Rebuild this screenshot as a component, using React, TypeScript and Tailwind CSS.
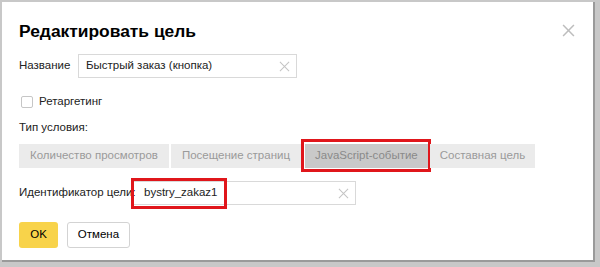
import React from 'react';

const font = { fontFamily: '"Liberation Sans", Arial, sans-serif' };

function Cross({ size, color, stroke }: { size: number; color: string; stroke: number }) {
  return (
    <svg width={size} height={size} viewBox="0 0 12 12" fill="none">
      <path d="M1 1L11 11M11 1L1 11" stroke={color} strokeWidth={stroke} />
    </svg>
  );
}

const types = ['Количество просмотров', 'Посещение страниц', 'JavaScript-событие', 'Составная цель'];

export default function App() {
  return (
    <div className="h-[267px] w-[600px] overflow-hidden bg-[#c8c8c8] pl-[2px] pt-[2px]" style={font}>
      <div className="h-[260px] w-[593px] whitespace-nowrap border-r-[2px] border-b-[2px] border-[#9a9a9a] bg-white pl-[17px] pt-[18px] text-[11.5px] text-[#222]">
        <div className="flex items-start justify-between pr-[18px]">
          <h1 className="text-[17.4px] font-bold leading-[23px] text-black">Редактировать цель</h1>
          <div className="mt-[4px]">
            <Cross size={13} color="#bdbdbd" stroke={1.4} />
          </div>
        </div>

        <div className="mt-[11px] flex items-center">
          <span className="w-[59px]">Название</span>
          <div className="flex h-[24px] w-[219px] items-center justify-between border border-[#d9d9d9] pl-[7px] pr-[6px]">
            <span>Быстрый заказ (кнопка)</span>
            <Cross size={11} color="#c4c4c4" stroke={1.1} />
          </div>
        </div>

        <div className="mt-[16px] flex h-[16px] items-center">
          <span className="ml-[2px] h-[12px] w-[12px] rounded-[2px] border border-[#c6c6c6]" />
          <span className="ml-[6px]">Ретаргетинг</span>
        </div>

        <div className="mt-[9px] leading-[16px]">Тип условия:</div>

        <div className="mt-[9px] flex gap-[2px]">
          {types.map((t, i) => (
            <div key={t} className={i === 2 ? 'relative ml-[2px]' : 'relative'}>
              <div
                className={
                  i === 2
                    ? 'flex h-[24px] items-center bg-[#c9c9c9] px-[10px] text-[#8a8a8a]'
                    : i === 3
                      ? 'flex h-[24px] items-center bg-[#ebebeb] px-[10px] text-[#9a9a9a]'
                      : 'flex h-[24px] items-center bg-[#ebebeb] px-[11px] text-[#9a9a9a]'
                }
              >
                {t}
              </div>
              {i === 2 && (
                <div className="pointer-events-none absolute -top-[5px] -bottom-[4px] -left-[4px] -right-[3px] border-[3px] border-[#e0161b]" />
              )}
            </div>
          ))}
        </div>

        <div className="mt-[13px] flex items-center">
          <span className="w-[114px]">Идентификатор цели:</span>
          <div className="relative">
            <div className="flex h-[24px] w-[223px] items-center justify-between border border-[#d9d9d9] pl-[10px] pr-[6px]">
              <span>bystry_zakaz1</span>
              <Cross size={11} color="#c4c4c4" stroke={1.1} />
            </div>
            <div className="pointer-events-none absolute -top-[3px] -bottom-[4px] -left-[2px] w-[96px] border-[3px] border-[#e0161b]" />
          </div>
        </div>

        <div className="mt-[17px] flex gap-[9px]">
          <div className="flex h-[26px] w-[39px] items-center justify-center rounded-[3px] bg-[#f8d34a] text-black">OK</div>
          <div className="flex h-[26px] w-[63px] items-center justify-center rounded-[3px] border border-[#d3d3d3] bg-white text-black">
            Отмена
          </div>
        </div>
      </div>
    </div>
  );
}
